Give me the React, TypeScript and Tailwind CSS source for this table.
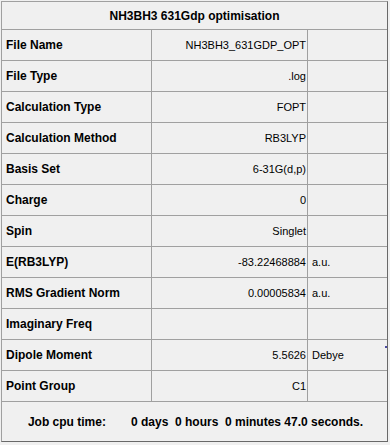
import React from 'react';

type SummaryRow = {
  label: string;
  value?: string;
  unit?: string;
};

const rows: SummaryRow[] = [
  { label: 'File Name', value: 'NH3BH3_631GDP_OPT' },
  { label: 'File Type', value: '.log' },
  { label: 'Calculation Type', value: 'FOPT' },
  { label: 'Calculation Method', value: 'RB3LYP' },
  { label: 'Basis Set', value: '6-31G(d,p)' },
  { label: 'Charge', value: '0' },
  { label: 'Spin', value: 'Singlet' },
  { label: 'E(RB3LYP)', value: '-83.22468884', unit: 'a.u.' },
  { label: 'RMS Gradient Norm', value: '0.00005834', unit: 'a.u.' },
  { label: 'Imaginary Freq' },
  { label: 'Dipole Moment', value: '5.5626', unit: 'Debye' },
  { label: 'Point Group', value: 'C1' },
];

export default function App() {
  return (
    <div
      className="relative w-[390px] h-[445px] bg-[#f0f0f0] pt-px pl-px text-black"
      style={{ fontFamily: '"Liberation Sans", Arial, sans-serif' }}
    >
      <div className="flex flex-col w-[387px] h-[441px] border-t border-l border-t-[#a0a0a0] border-l-[#a0a0a0] border-r border-b border-r-[#696969] border-b-[#696969]">
        {/* title */}
        <div className="flex h-[28px] items-center justify-center border-b border-[#a0a0a0] text-[12px] font-bold">
          NH3BH3 631Gdp optimisation
        </div>

        {/* summary rows */}
        {rows.map((row) => (
          <div
            key={row.label}
            className="grid grid-cols-[150px_156px_1fr] h-[31px] border-b border-[#a0a0a0]"
          >
            <div className="flex items-center pl-1 border-r border-[#a0a0a0] text-[12px] font-bold">
              {row.label}
            </div>
            <div className="flex items-center justify-end pr-px border-r border-[#a0a0a0] text-[11px]">
              {row.value}
            </div>
            <div className="flex items-center pl-1 text-[11px]">{row.unit}</div>
          </div>
        ))}

        {/* footer */}
        <div className="flex flex-1 items-center justify-center gap-[25px] text-[12px] font-bold pl-[2px]">
          <span>Job cpu time:</span>
          <span className="whitespace-pre">0 days  0 hours  0 minutes 47.0 seconds.</span>
        </div>
      </div>

      <span className="absolute left-[385px] top-[346px] w-[2px] h-[2px] bg-[#4a4aa0]" />
    </div>
  );
}
